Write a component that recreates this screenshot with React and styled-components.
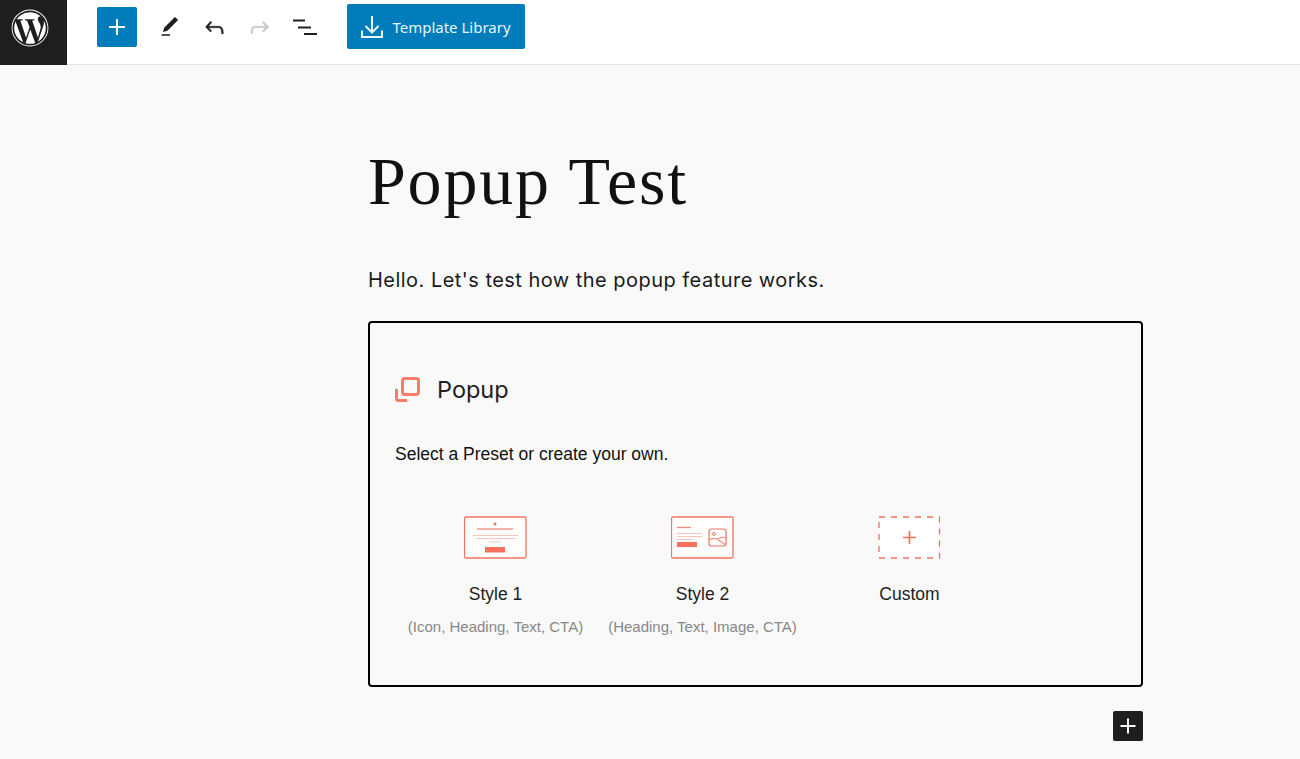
import styled, { createGlobalStyle } from "styled-components";
import { FaWordpress } from "react-icons/fa";

const GlobalStyle = createGlobalStyle`
  html, body {
    margin: 0;
    padding: 0;
    background: #f9f9f9;
    font-family: "Liberation Sans", Arial, sans-serif;
    overflow: hidden;
  }
`;

const PlusIcon = ({ size = 24 }) => (
  <svg width={size} height={size} viewBox="0 0 24 24" fill="currentColor">
    <path d="M18 11.2h-5.2V6h-1.6v5.2H6v1.6h5.2V18h1.6v-5.2H18z" />
  </svg>
);

const PencilIcon = () => (
  <svg width="24" height="24" viewBox="0 0 24 24" fill="currentColor">
    <path d="M20.1 5.1 16.9 2 6.2 12.7l-1.300 4.400 4.500-1.300L20.100 5.100zM3.500 20.800h8.500v-1.600H3.500v1.600z" />
  </svg>
);

const UndoIcon = () => (
  <svg width="27" height="27" viewBox="0 0 24 24" fill="currentColor" stroke="currentColor" strokeWidth="0.4">
    <path d="M18.300 11.700c-.6-.6-1.400-.9-2.300-.9H6.700l2.900-3.300-1.100-1-4.500 5L8.500 16l1-1-2.700-2.700H16c.5 0 .9.2 1.300.5 1 1 1 3.400 1 4.500v.3h1.500v-.2c0-1.500 0-4.300-1.500-5.700z" />
  </svg>
);

const RedoIcon = () => (
  <svg width="27" height="27" viewBox="0 0 24 24" fill="currentColor" stroke="currentColor" strokeWidth="0.4">
    <path d="M15.600 6.500l-1.100 1 2.900 3.300H8c-.9 0-1.700.3-2.300.9-1.400 1.500-1.400 4.200-1.400 5.600v.2h1.500v-.3c0-1.100 0-3.500 1-4.500.3-.3.7-.5 1.300-.5h9.200L14.600 15l1.100 1.100 4.600-4.600-4.700-5z" />
  </svg>
);

const ListIcon = () => (
  <svg width="24" height="24" viewBox="0 0 24 24" fill="currentColor">
    <path d="M0 4.500h12v2H0zM5 11.500h13v2H5zM11 18h13v2H11z" />
  </svg>
);

const DownloadIcon = () => (
  <svg width="22" height="24" viewBox="0 0 22 24" fill="none" stroke="currentColor" strokeWidth="2">
    <path d="M11 1v16M4.500 11l6.500 6.500 6.500-6.500M1 15.500V22h20v-6.500" />
  </svg>
);

const PopupIcon = () => (
  <svg width="26" height="26" viewBox="0 0 26 26" fill="none" stroke="#fb7a68" strokeWidth="3">
    <rect x="7.500" y="1.500" width="16" height="16" rx="2.500" />
    <path d="M1.500 13v8.500a2 2 0 0 0 2 2H11" strokeLinecap="round" />
  </svg>
);

const StyleOneIcon = () => (
  <svg width="63" height="43" viewBox="0 0 63 43" fill="none">
    <rect x="0.500" y="1" width="61.500" height="41" rx="1.500" fill="#fff" stroke="#f2745f" strokeWidth="1.300" />
    <circle cx="31" cy="8" r="1.500" fill="#f2745f" />
    <path d="M13 13h36" stroke="#f09a8a" strokeWidth="1.300" />
    <path d="M9 19.500h45M12 22.500h39" stroke="#f9c6bc" strokeWidth="1.100" />
    <path d="M25 26h12" stroke="#f9c6bc" strokeWidth="1.100" />
    <rect x="21" y="31" width="20" height="5.500" fill="#f8705c" />
  </svg>
);

const StyleTwoIcon = () => (
  <svg width="63" height="43" viewBox="0 0 63 43" fill="none">
    <rect x="0.500" y="1" width="61.500" height="41" rx="1.500" fill="#fff" stroke="#f2745f" strokeWidth="1.300" />
    <path d="M6 11.500h14" stroke="#f08a78" strokeWidth="1.300" />
    <path d="M6 17.500h25M6 20.500h25M6 23.500h16" stroke="#f9c6bc" strokeWidth="1.100" />
    <rect x="6" y="26" width="20" height="5" fill="#f8705c" />
    <rect x="38" y="13" width="17" height="17" rx="2.500" stroke="#f2745f" strokeWidth="1.200" />
    <circle cx="43" cy="18" r="1.500" stroke="#f2745f" />
    <path d="M38 24c5-3 8-2 11 1l6 4M46 23c3-1.500 6-2 9-1.500" stroke="#f08a78" strokeWidth="1.100" />
  </svg>
);

const CustomIcon = () => (
  <svg width="63" height="43" viewBox="0 0 63 43" fill="none">
    <rect x="1" y="1" width="60.500" height="41" fill="#fff" stroke="#f0705c" strokeWidth="1.300" strokeDasharray="6 6" />
    <path d="M25 21.500h13M31.500 15v13" stroke="#f8705c" strokeWidth="1.700" />
  </svg>
);

const presets = [
  { id: "one", icon: <StyleOneIcon />, title: "Style 1", note: "(Icon, Heading, Text, CTA)" },
  { id: "two", icon: <StyleTwoIcon />, title: "Style 2", note: "(Heading, Text, Image, CTA)" },
  { id: "custom", icon: <CustomIcon />, title: "Custom" },
];

export default function App() {
  return (
    <>
      <GlobalStyle />
      <Page>
        <Toolbar>
          <Logo>
            <FaWordpress size={38} />
          </Logo>
          <Tools>
            <AddButton>
              <PlusIcon size={32} />
            </AddButton>
            <ToolButton>
              <PencilIcon />
            </ToolButton>
            <ToolButton>
              <UndoIcon />
            </ToolButton>
            <ToolButton $disabled>
              <RedoIcon />
            </ToolButton>
            <ToolButton>
              <ListIcon />
            </ToolButton>
            <LibraryButton>
              <DownloadIcon />
              Template Library
            </LibraryButton>
          </Tools>
        </Toolbar>
        <Content>
          <Title>Popup Test</Title>
          <Intro>Hello. Let's test how the popup feature works.</Intro>
          <Card>
            <CardHead>
              <PopupIcon />
              <CardTitle>Popup</CardTitle>
            </CardHead>
            <CardText>Select a Preset or create your own.</CardText>
            <PresetRow>
              {presets.map((preset) => (
                <Preset key={preset.id}>
                  {preset.icon}
                  <PresetTitle>{preset.title}</PresetTitle>
                  {preset.note && <PresetNote>{preset.note}</PresetNote>}
                </Preset>
              ))}
            </PresetRow>
          </Card>
          <Footer>
            <InsertButton>
              <PlusIcon size={32} />
            </InsertButton>
          </Footer>
        </Content>
      </Page>
    </>
  );
}

const Page = styled.div`
  width: 1300px;
  height: 759px;
  display: flex;
  flex-direction: column;
`;

const Toolbar = styled.header`
  height: 64px;
  flex: none;
  display: flex;
  background: #fff;
  border-bottom: 1px solid #e2e2e2;
`;

const Logo = styled.div`
  box-sizing: border-box;
  width: 67px;
  height: 65px;
  padding: 9px 0 0 11px;
  background: #1e1e1e;
  color: #fff;
`;

const Tools = styled.div`
  display: flex;
  align-items: flex-start;
  padding-left: 30px;
`;

const AddButton = styled.div`
  width: 40px;
  height: 40px;
  margin: 7px 10px 0 0;
  background: #007cba;
  color: #fff;
  border-radius: 2px;
  display: flex;
  align-items: center;
  justify-content: center;
`;

const ToolButton = styled.div`
  width: 45px;
  height: 40px;
  margin-top: 7px;
  color: ${(props) => (props.$disabled ? "#c8c8c8" : "#1e1e1e")};
  display: flex;
  align-items: center;
  justify-content: center;
`;

const LibraryButton = styled.div`
  width: 178px;
  height: 45px;
  margin: 4px 0 0 20px;
  padding-top: 1px;
  box-sizing: border-box;
  background: #007cba;
  color: #e8f6fd;
  border-radius: 2px;
  font-family: "Noto Sans", sans-serif;
  font-size: 15px;
  display: flex;
  align-items: center;
  justify-content: center;
  gap: 9px;
`;

const Content = styled.main`
  width: 775px;
  margin-left: 368px;
  display: flex;
  flex-direction: column;
`;

const Title = styled.h1`
  margin: 72px 0 0;
  height: 88px;
  font-family: "Liberation Serif", serif;
  font-size: 68px;
  line-height: 88px;
  font-weight: 400;
  letter-spacing: 1.8px;
  color: #111;
`;

const Intro = styled.p`
  margin: 40px 0 0;
  font-family: Inter, sans-serif;
  font-size: 20px;
  line-height: 30px;
  letter-spacing: 0.47px;
  color: #1a1a1a;
`;

const Card = styled.section`
  box-sizing: border-box;
  height: 366px;
  margin-top: 26px;
  padding: 52px 25px 0;
  border: 2px solid #000;
  border-radius: 4px;
`;

const CardHead = styled.div`
  display: flex;
  align-items: center;
  gap: 16px;
`;

const CardTitle = styled.span`
  font-family: Inter, sans-serif;
  font-size: 23.5px;
  line-height: 30px;
  color: #1e1e1e;
`;

const CardText = styled.p`
  margin: 38px 0 0;
  font-family: "Liberation Sans", sans-serif;
  font-size: 17.5px;
  line-height: 22px;
  color: #111;
`;

const PresetRow = styled.div`
  display: flex;
  margin: 51px 0 0 -3px;
`;

const Preset = styled.div`
  width: 207px;
  display: flex;
  flex-direction: column;
  align-items: center;
  text-align: center;
`;

const PresetTitle = styled.span`
  margin-top: 24px;
  font-size: 17.5px;
  line-height: 22px;
  color: #1e1e1e;
`;

const PresetNote = styled.span`
  margin-top: 12px;
  font-size: 15px;
  line-height: 20px;
  color: #888;
  white-space: nowrap;
`;

const Footer = styled.div`
  display: flex;
  justify-content: flex-end;
  margin-top: 24px;
`;

const InsertButton = styled.div`
  width: 30px;
  height: 30px;
  background: #1e1e1e;
  color: #fff;
  border-radius: 2px;
  display: flex;
  align-items: center;
  justify-content: center;
`;
